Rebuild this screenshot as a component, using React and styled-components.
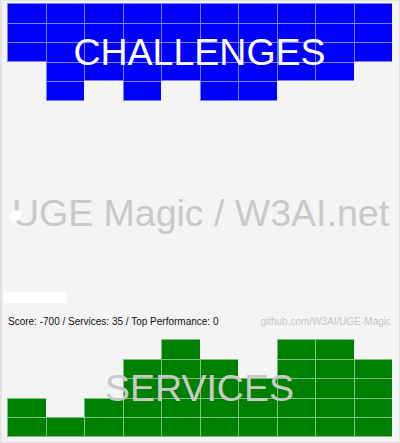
import React from "react";
import styled, { createGlobalStyle } from "styled-components";

const GlobalStyle = createGlobalStyle`
    html, body {
        margin: 0;
        padding: 0;
        background: #f4f4f4;
    }
    * {
        box-sizing: border-box;
    }
`;

const challengeHeights = [3, 5, 4, 5, 4, 5, 5, 4, 4, 3];
const serviceHeights = [2, 1, 2, 4, 5, 4, 3, 5, 5, 4];

const CELL_H = 19.5;
const LINE = "rgba(255, 255, 255, 0.5)";

const Frame = styled.div`
    width: 400px;
    height: 443px;
    border: 1px solid #e2e2e2;
    border-left-width: 2px;
    background: #f4f4f4;
    display: flex;
    flex-direction: column;
    font-family: "Liberation Sans", Arial, sans-serif;
    overflow: hidden;
`;

const Board = styled.div`
    position: relative;
    margin: ${(p) => p.$margin};
    width: 385px;
    height: ${CELL_H * 5}px;
    display: grid;
    grid-template-columns: repeat(10, 1fr);
`;

const Column = styled.div`
    display: flex;
    flex-direction: column;
    justify-content: ${(p) => (p.$fromBottom ? "flex-end" : "flex-start")};

    &:last-child > div {
        border-right: 1px solid ${LINE};
    }
`;

const Cell = styled.div`
    height: ${CELL_H}px;
    background: ${(p) => p.$color};
    border-left: 1px solid ${LINE};
    border-top: 1px solid ${LINE};

    &:last-child {
        border-bottom: 1px solid ${LINE};
    }
`;

const BoardLabel = styled.div`
    position: absolute;
    left: 0;
    right: 0;
    top: ${(p) => p.$top}px;
    text-align: center;
    font-size: 37.5px;
    line-height: 1;
    color: ${(p) => p.$color};
    pointer-events: none;
`;

const Title = styled.div`
    position: relative;
    margin-top: 94.5px;
    height: 37.5px;
    text-align: center;
    font-size: 37.5px;
    line-height: 1;
    color: #c9c9c9;
    white-space: nowrap;
`;

const Ball = styled.span`
    position: absolute;
    left: 8px;
    top: 15px;
    width: 11px;
    height: 11px;
    border-radius: 50%;
    background: #ffffff;
`;

const ProgressBar = styled.div`
    margin: 59.5px 0 0 2px;
    width: 63px;
    height: 11px;
    background: #ffffff;
`;

const StatusRow = styled.div`
    margin-top: 13.5px;
    padding: 0 8px 0 6px;
    height: 10px;
    display: flex;
    justify-content: space-between;
    align-items: baseline;
    font-size: 10px;
    line-height: 1;
    white-space: nowrap;
`;

const Score = styled.span`
    color: #111111;
`;

const RepoLink = styled.span`
    color: #c6c6c6;
`;

const Grid = ({ heights, color, fromBottom, margin, label, labelColor, labelTop }) => (
    <Board $margin={margin}>
        {heights.map((h, i) => (
            <Column key={i} $fromBottom={fromBottom}>
                {Array.from({ length: h }).map((_, j) => (
                    <Cell key={j} $color={color} />
                ))}
            </Column>
        ))}
        <BoardLabel $color={labelColor} $top={labelTop}>
            {label}
        </BoardLabel>
    </Board>
);

const App = () => {
    return (
        <>
            <GlobalStyle />
            <Frame>
                <Grid
                    heights={challengeHeights}
                    color="#0000ff"
                    margin="2px 0 0 5px"
                    label="CHALLENGES"
                    labelColor="#ffffff"
                    labelTop={30.5}
                />
                <Title>
                    <Ball />
                    UGE Magic / W3AI.net
                </Title>
                <ProgressBar />
                <StatusRow>
                    <Score>Score: -700 / Services: 35 / Top Performance: 0</Score>
                    <RepoLink>github.com/W3AI/UGE-Magic</RepoLink>
                </StatusRow>
                <Grid
                    heights={serviceHeights}
                    color="#008000"
                    fromBottom
                    margin="12.5px 0 0 5px"
                    label="SERVICES"
                    labelColor="#c9c9c9"
                    labelTop={30.5}
                />
            </Frame>
        </>
    );
};

export default App;
